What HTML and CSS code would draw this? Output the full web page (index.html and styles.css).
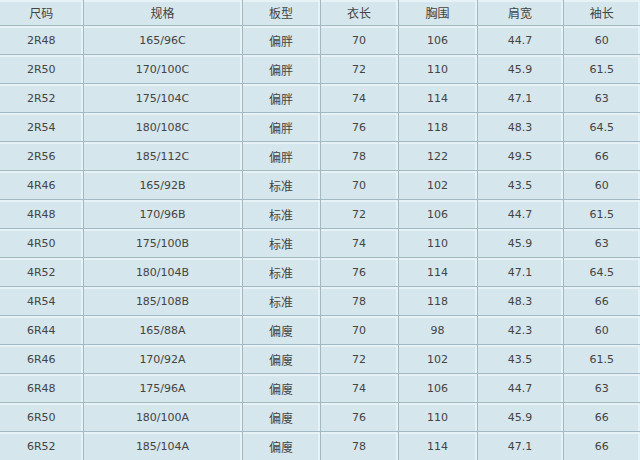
FILE: index.html
```html
<!DOCTYPE html>
<html lang="zh">
<head>
<meta charset="utf-8">
<link rel="stylesheet" href="styles.css">
</head>
<body>
<table class="size-table">
<colgroup>
<col class="c1"><col class="c2"><col class="c3"><col class="c4"><col class="c5"><col class="c6"><col class="c7">
</colgroup>
<thead>
<tr><th class="zh">尺码</th><th class="zh">规格</th><th class="zh">板型</th><th class="zh">衣长</th><th class="zh">胸围</th><th class="zh">肩宽</th><th class="zh">袖长</th></tr>
</thead>
<tbody>
<tr><td>2R48</td><td>165/96C</td><td class="zh">偏胖</td><td>70</td><td>106</td><td>44.7</td><td>60</td></tr>
<tr><td>2R50</td><td>170/100C</td><td class="zh">偏胖</td><td>72</td><td>110</td><td>45.9</td><td>61.5</td></tr>
<tr><td>2R52</td><td>175/104C</td><td class="zh">偏胖</td><td>74</td><td>114</td><td>47.1</td><td>63</td></tr>
<tr><td>2R54</td><td>180/108C</td><td class="zh">偏胖</td><td>76</td><td>118</td><td>48.3</td><td>64.5</td></tr>
<tr><td>2R56</td><td>185/112C</td><td class="zh">偏胖</td><td>78</td><td>122</td><td>49.5</td><td>66</td></tr>
<tr><td>4R46</td><td>165/92B</td><td class="zh">标准</td><td>70</td><td>102</td><td>43.5</td><td>60</td></tr>
<tr><td>4R48</td><td>170/96B</td><td class="zh">标准</td><td>72</td><td>106</td><td>44.7</td><td>61.5</td></tr>
<tr><td>4R50</td><td>175/100B</td><td class="zh">标准</td><td>74</td><td>110</td><td>45.9</td><td>63</td></tr>
<tr><td>4R52</td><td>180/104B</td><td class="zh">标准</td><td>76</td><td>114</td><td>47.1</td><td>64.5</td></tr>
<tr><td>4R54</td><td>185/108B</td><td class="zh">标准</td><td>78</td><td>118</td><td>48.3</td><td>66</td></tr>
<tr><td>6R44</td><td>165/88A</td><td class="zh">偏廋</td><td>70</td><td>98</td><td>42.3</td><td>60</td></tr>
<tr><td>6R46</td><td>170/92A</td><td class="zh">偏廋</td><td>72</td><td>102</td><td>43.5</td><td>61.5</td></tr>
<tr><td>6R48</td><td>175/96A</td><td class="zh">偏廋</td><td>74</td><td>106</td><td>44.7</td><td>63</td></tr>
<tr><td>6R50</td><td>180/100A</td><td class="zh">偏廋</td><td>76</td><td>110</td><td>45.9</td><td>66</td></tr>
<tr><td>6R52</td><td>185/104A</td><td class="zh">偏廋</td><td>78</td><td>114</td><td>47.1</td><td>66</td></tr>
</tbody>
</table>
</body>
</html>
```
FILE: styles.css
```css
html, body {
  margin: 0;
  padding: 0;
  background: #d5e6ec;
  overflow: hidden;
}
.size-table {
  width: 640px;
  border-collapse: collapse;
  table-layout: fixed;
  font-family: "DejaVu Sans", "Noto Sans CJK SC", sans-serif;
  font-size: 11px;
  color: #444;
  background: #d5e6ec;
}
.c1 { width: 83px; }
.c2 { width: 159px; }
.c3 { width: 78px; }
.c4 { width: 78px; }
.c5 { width: 79px; }
.c6 { width: 86px; }
.c7 { width: 77px; }
.size-table th,
.size-table td {
  padding: 0;
  text-align: center;
  font-weight: normal;
  border-right: 1px solid #a3b9c1;
  border-bottom: 1px solid #a3b9c1;
  box-shadow: inset 0 2px 0 #e6f2f5, inset -2px 0 0 #e6f2f5;
}
.size-table th {
  height: 25px;
}
.size-table td {
  height: 28px;
}
.size-table th:last-child,
.size-table td:last-child {
  border-right: none;
}
.zh {
  font-size: 12px;
}
```
